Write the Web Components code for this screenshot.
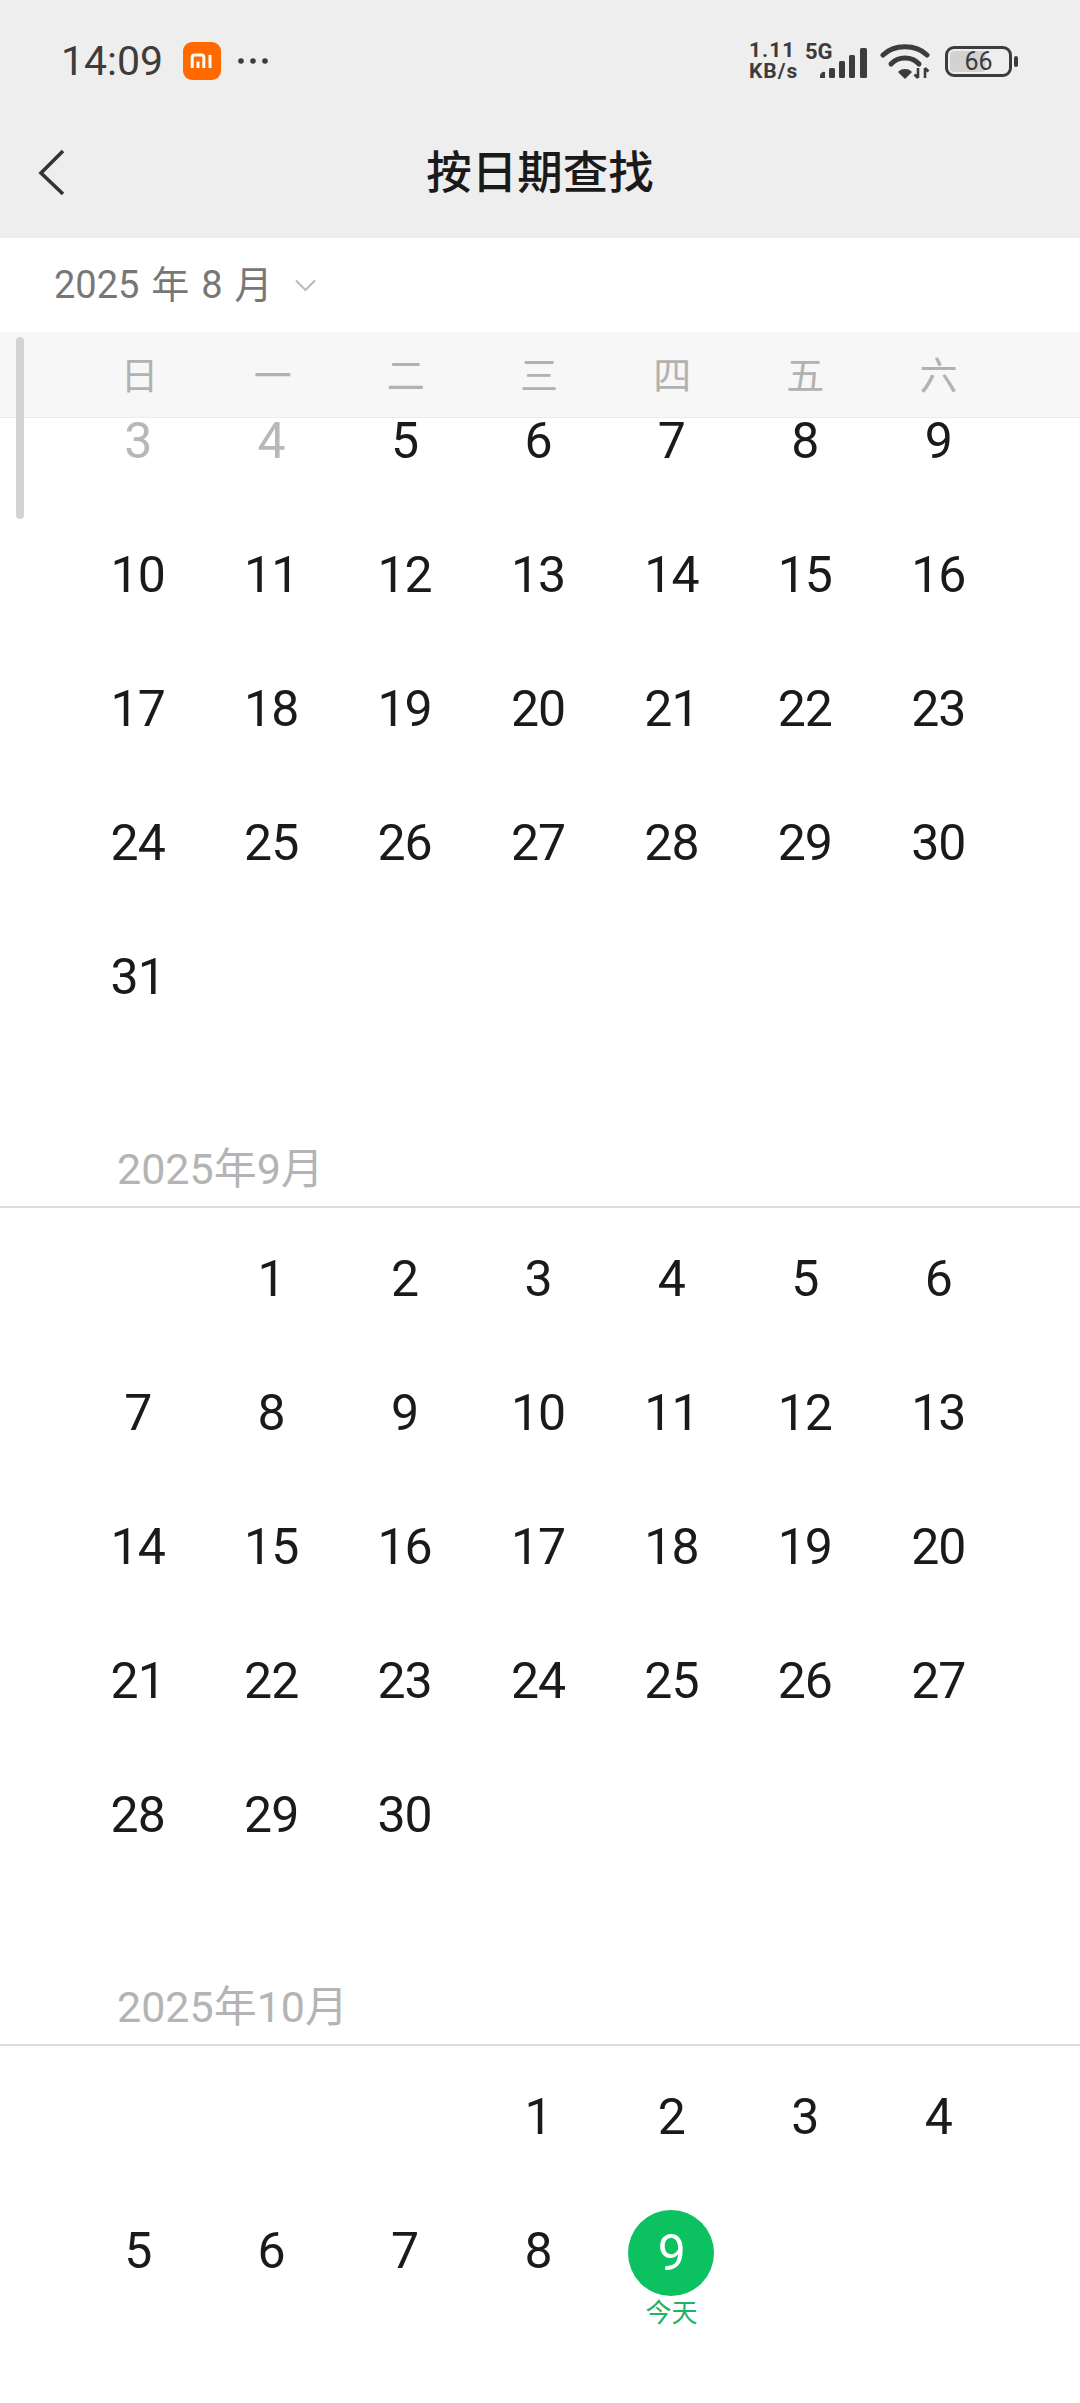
<!DOCTYPE html>
<html lang="zh">
<head>
<meta charset="utf-8">
<title>按日期查找</title>
<style>
    html, body{
        margin: 0;
        height: 2403px;
        overflow: hidden;
        background: #fff;
        font-family: Roboto, "Noto Sans CJK SC", sans-serif;
    }
</style>
</head>
<body>
<date-page></date-page>

<script>
class StatusBar extends HTMLElement{
    constructor(){
        super();
        this.attachShadow({ mode: 'open' });
    }

    connectedCallback(){
        this.shadowRoot.innerHTML = `
            <style>
                :host{
                    display: flex;
                    align-items: center;
                    height: 122px;
                    padding: 0 62px 0 61px;
                    color: #3c3c3c;
                }
                .time{ font-size: 41px; font-weight: 400; line-height: 1; }
                .mi{ margin-left: 20px; display: block; }
                .dots{ margin-left: 17px; display: block; }
                .right{ margin-left: auto; display: flex; align-items: center; }
                .speed{ font-size: 21px; font-weight: 700; line-height: 21px; letter-spacing: 1px; width: 56px; }
                .net{ display: flex; align-items: flex-end; height: 36px; margin-top: -3px; }
                .g{ font-size: 22px; font-weight: 700; line-height: 20px; align-self: flex-start; width: 14px; white-space: nowrap; }
                svg{ display: block; }
            </style>
            <span class="time">14:09</span>
            <svg class="mi" width="38" height="38" viewBox="0 0 38 38">
                <rect width="38" height="38" rx="9" fill="#ff6900"/>
                <path d="M9.2 26V15.5a2.5 2.5 0 0 1 2.5-2.5h6.6a2.5 2.5 0 0 1 2.5 2.5V26M15 19.5V26M27 13V26" fill="none" stroke="#fff" stroke-width="3"/>
            </svg>
            <svg class="dots" width="32" height="8" viewBox="0 0 32 8" fill="#3c3c3c">
                <circle cx="3" cy="4" r="2.8"/><circle cx="15" cy="4" r="2.8"/><circle cx="27" cy="4" r="2.8"/>
            </svg>
            <div class="right">
                <div class="speed">1.11<br>KB/s</div>
                <div class="net">
                    <span class="g">5G</span>
                    <svg width="48" height="30" viewBox="0 0 48 30" fill="#3c3c3c">
                        <path d="M1 30v-2a4 4 0 0 1 5-4v6z"/>
                        <rect x="10" y="20" width="6" height="10" rx="1.5"/>
                        <rect x="20" y="13" width="6" height="17" rx="1.5"/>
                        <rect x="30" y="7" width="6" height="23" rx="1.5"/>
                        <rect x="41" y="0" width="7" height="30" rx="1.5"/>
                    </svg>
                </div>
                <svg style="margin-left:13px" width="50" height="36" viewBox="0 0 50 36" fill="none" stroke="#3c3c3c">
                    <path d="M3 12C14 1 36 1 47 12" stroke-width="5" stroke-linecap="round"/>
                    <path d="M11 21C18 13 32 13 39 21" stroke-width="5" stroke-linecap="round"/>
                    <path d="M19 29C22 26 28 26 31 29L25 35Z" fill="#3c3c3c" stroke-width="1.5" stroke-linejoin="round"/>
                    <path d="M38 25V35M38 35l-3.5-3.5M45 35V25M45 25l3.5 3.5" stroke-width="2.6"/>
                </svg>
                <bat-icon level="66" style="margin-left:15px"></bat-icon>
            </div>
        `;
    }
}

class BatIcon extends HTMLElement{
    constructor(){
        super();
        this.attachShadow({ mode: 'open' });
    }

    connectedCallback(){
        let level = this.getAttribute("level");
        this.shadowRoot.innerHTML = `
            <style>
                :host{ display: flex; align-items: center; }
                .body{
                    position: relative;
                    box-sizing: border-box;
                    width: 67px;
                    height: 31px;
                    border: 3px solid #3c3c3c;
                    border-radius: 9px;
                    padding: 2px;
                    display: flex;
                    align-items: center;
                    justify-content: center;
                    font-size: 25px;
                    font-weight: 400;
                    line-height: 1;
                    color: #3c3c3c;
                }
                .fill{
                    position: absolute;
                    left: 2px; top: 2px; bottom: 2px;
                    width: ${level * 0.55}px;
                    background: #d2d2d2;
                    border-radius: 4px;
                }
                span{ position: relative; }
                .tip{ width: 4px; height: 11px; margin-left: 2px; border-radius: 2px; background: #3c3c3c; }
            </style>
            <div class="body"><div class="fill"></div><span>${level}</span></div>
            <div class="tip"></div>
        `;
    }
}

class NavBar extends HTMLElement{
    constructor(){
        super();
        this.attachShadow({ mode: 'open' });
    }

    connectedCallback(){
        this.shadowRoot.innerHTML = `
            <style>
                :host{
                    display: flex;
                    align-items: center;
                    justify-content: center;
                    position: relative;
                    height: 104px;
                    padding-bottom: 12px;
                }
                svg{ position: absolute; left: 38px; top: 27px; }
                .title{ font-size: 45.5px; font-weight: 500; color: #1a1a1a; line-height: 1; }
            </style>
            <svg width="28" height="48" viewBox="0 0 28 48" fill="none" stroke="#333" stroke-width="3.6">
                <path d="M25 2L3 24L25 45"/>
            </svg>
            <span class="title"><slot></slot></span>
        `;
    }
}

class MonthPicker extends HTMLElement{
    constructor(){
        super();
        this.attachShadow({ mode: 'open' });
    }

    connectedCallback(){
        this.shadowRoot.innerHTML = `
            <style>
                :host{
                    display: flex;
                    align-items: center;
                    height: 94px;
                    padding-left: 54px;
                    background: #fff;
                    color: #777;
                    font-size: 38px;
                    word-spacing: 2.5px;
                    line-height: 1;
                }
                svg{ margin-left: 22px; display: block; }
            </style>
            <span><slot></slot></span>
            <svg width="21" height="13" viewBox="0 0 21 13" fill="none" stroke="#bdbdbd" stroke-width="2.2">
                <path d="M1 1.5L10.5 11L20 1.5"/>
            </svg>
        `;
    }
}

class WeekRow extends HTMLElement{
    constructor(){
        super();
        this.attachShadow({ mode: 'open' });
    }

    connectedCallback(){
        let cols = ["日", "一", "二", "三", "四", "五", "六"].map(d => `<span>${d}</span>`).join("");
        this.shadowRoot.innerHTML = `
            <style>
                :host{
                    display: grid;
                    grid-template-columns: repeat(7, 1fr);
                    align-items: center;
                    box-sizing: border-box;
                    position: relative;
                    z-index: 1;
                    height: 86px;
                    padding: 2px 75px 0 73px;
                    background: #f7f7f7;
                    border-bottom: 1px solid #ececec;
                    color: #b2b2b2;
                    font-size: 38px;
                    line-height: 1;
                    text-align: center;
                }
            </style>
            ${cols}
        `;
    }
}

class DayCell extends HTMLElement{
    constructor(){
        super();
        this.attachShadow({ mode: 'open' });
    }

    connectedCallback(){
        let today = this.hasAttribute("today");
        let muted = this.hasAttribute("muted");
        this.shadowRoot.innerHTML = `
            <style>
                :host{
                    display: flex;
                    flex-direction: column;
                    align-items: center;
                    height: 134px;
                    font-size: 50px;
                    font-weight: 400;
                    letter-spacing: -1px;
                    line-height: 40px;
                    color: ${muted ? "#b8b8b8" : "#1a1a1a"};
                }
                .num{ flex: none; box-sizing: border-box; display: flex; align-items: center; justify-content: center; height: 134px; padding-top: 2px; }
                .today{
                    width: 86px;
                    height: 86px;
                    margin-top: 27px;
                    padding: 0;
                    border-radius: 50%;
                    background: #0bc160;
                    color: #fff;
                }
                .label{ flex: none; margin-top: 0; font-size: 26px; letter-spacing: 0; line-height: 34px; color: #1fb268; white-space: nowrap; }
            </style>
            ${today
                ? `<div class="num today"><slot></slot></div><div class="label">今天</div>`
                : `<div class="num"><slot></slot></div>`}
        `;
    }
}

class MonthBlock extends HTMLElement{
    constructor(){
        super();
        this.attachShadow({ mode: 'open' });
    }

    connectedCallback(){
        let label = this.getAttribute("label");
        let offset = Number(this.getAttribute("offset") || 0);
        let from = Number(this.getAttribute("from") || 1);
        let to = Number(this.getAttribute("to"));
        let muted = (this.getAttribute("muted") || "").split(",");
        let today = this.getAttribute("today");

        let cells = "";
        for(let i = 0; i < offset; i++){
            cells += `<div></div>`;
        }
        for(let d = from; d <= to; d++){
            let flags = muted.includes(String(d)) ? " muted" : "";
            if(String(d) === today) flags += " today";
            cells += `<day-cell${flags}>${d}</day-cell>`;
        }

        this.shadowRoot.innerHTML = `
            <style>
                :host{ display: block; }
                .head{
                    box-sizing: border-box;
                    height: 165px;
                    padding: 101px 0 0 117px;
                    border-bottom: 2px solid #dcdcdc;
                    color: #b4b4b4;
                    font-size: 43px;
                    line-height: 50px;
                }
                .days{
                    display: grid;
                    grid-template-columns: repeat(7, 1fr);
                    padding: 3px 75px 0 71px;
                }
            </style>
            ${label ? `<div class="head">${label}</div>` : ""}
            <div class="days">${cells}</div>
        `;
    }
}

class DatePage extends HTMLElement{
    constructor(){
        super();
        this.attachShadow({ mode: 'open' });
    }

    connectedCallback(){
        this.shadowRoot.innerHTML = `
            <style>
                :host{ display: block; position: relative; height: 2403px; overflow: hidden; }
                header{ background: #eeeeee; }
                .scrolled{ margin-top: -48px; }
                .thumb{
                    position: absolute;
                    z-index: 2;
                    left: 16px; top: 337px;
                    width: 8px; height: 182px;
                    border-radius: 4px;
                    background: #d3d3d3;
                }
            </style>
            <header>
                <status-bar></status-bar>
                <nav-bar>按日期查找</nav-bar>
            </header>
            <month-picker>2025 年 8 月</month-picker>
            <week-row></week-row>
            <div class="list">
                <month-block class="scrolled" from="3" to="31" muted="3,4"></month-block>
                <month-block label="2025年9月" offset="1" to="30"></month-block>
                <month-block label="2025年10月" offset="3" to="9" today="9"></month-block>
            </div>
            <div class="thumb"></div>
        `;
    }
}

customElements.define('bat-icon', BatIcon);
customElements.define('status-bar', StatusBar);
customElements.define('nav-bar', NavBar);
customElements.define('month-picker', MonthPicker);
customElements.define('week-row', WeekRow);
customElements.define('day-cell', DayCell);
customElements.define('month-block', MonthBlock);
customElements.define('date-page', DatePage);
</script>
</body>
</html>
